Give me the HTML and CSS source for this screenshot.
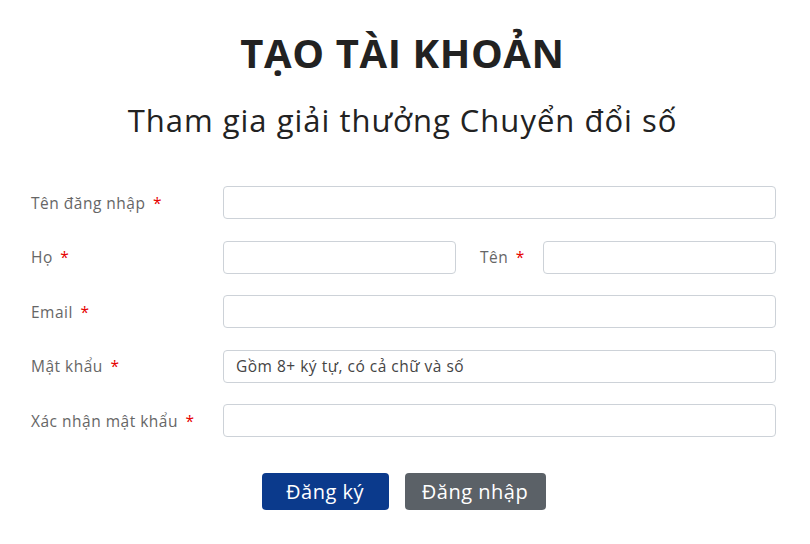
FILE: index.html
```html
<!DOCTYPE html>
<html lang="vi">
<head>
<meta charset="utf-8">
<title>Tạo tài khoản</title>
<link rel="stylesheet" href="styles.css">
</head>
<body>
<main class="page">
  <h1 class="title">TẠO TÀI KHOẢN</h1>
  <h2 class="subtitle">Tham gia giải thưởng Chuyển đổi số</h2>
  <form class="form">
    <div class="row">
      <label class="label">Tên đăng nhập <span class="req">*</span></label>
      <input class="input" type="text">
    </div>
    <div class="row">
      <label class="label">Họ <span class="req">*</span></label>
      <input class="input" type="text">
      <label class="label label-inline">Tên <span class="req">*</span></label>
      <input class="input" type="text">
    </div>
    <div class="row">
      <label class="label">Email <span class="req">*</span></label>
      <input class="input" type="email">
    </div>
    <div class="row">
      <label class="label">Mật khẩu <span class="req">*</span></label>
      <input class="input" type="password" placeholder="Gồm 8+ ký tự, có cả chữ và số">
    </div>
    <div class="row">
      <label class="label">Xác nhận mật khẩu <span class="req">*</span></label>
      <input class="input" type="password">
    </div>
    <div class="actions">
      <button type="button" class="btn btn-primary">Đăng ký</button>
      <button type="button" class="btn btn-secondary">Đăng nhập</button>
    </div>
  </form>
</main>
</body>
</html>
```

FILE: styles.css
```css
html, body {
  margin: 0;
  padding: 0;
  background: #ffffff;
}
body {
  font-family: "Open Sans", "Noto Sans", sans-serif;
  color: #222;
}
.page {
  width: 805px;
  padding-top: 26px;
}
.title {
  margin: 0;
  text-align: center;
  font-size: 40px;
  font-weight: 700;
  letter-spacing: 0.6px;
  line-height: 54px;
  color: #222;
}
.subtitle {
  margin: 20px 0 0;
  text-align: center;
  font-size: 31px;
  font-weight: 400;
  letter-spacing: 1px;
  line-height: 40px;
  color: #222;
}
.form {
  margin-top: 46px;
  padding: 0 29px 0 31px;
  display: flex;
  flex-direction: column;
  gap: 21.5px;
}
.row {
  display: flex;
  align-items: center;
}
.label {
  width: 192px;
  flex: none;
  font-size: 15.5px;
  letter-spacing: 0.5px;
  color: #666;
}
.label-inline {
  width: 63px;
  margin-left: 24px;
}
.req {
  color: #e60000;
  margin-left: 3px;
}
.input {
  flex: 1;
  min-width: 0;
  height: 33px;
  box-sizing: border-box;
  border: 1px solid #cdd2d8;
  border-radius: 4px;
  padding: 0 12px;
  font-family: inherit;
  font-size: 15.5px;
  letter-spacing: 0.5px;
  background: #fff;
}
.input::placeholder {
  color: #444;
}
.actions {
  margin-top: 14px;
  display: flex;
  justify-content: center;
  gap: 16px;
}
.btn {
  height: 37px;
  border: none;
  border-radius: 4px;
  font-family: inherit;
  font-size: 20px;
  letter-spacing: 0.5px;
  color: #fff;
  padding: 0;
  cursor: pointer;
}
.btn-primary {
  width: 127px;
  background: #0b3a8c;
}
.btn-secondary {
  width: 141px;
  background: #5b6167;
}
```
